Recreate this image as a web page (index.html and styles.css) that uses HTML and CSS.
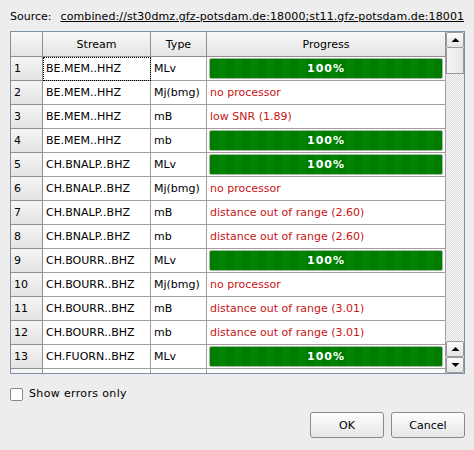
FILE: index.html
```html
<!DOCTYPE html>
<html>
<head>
<meta charset="utf-8">
<link rel="stylesheet" href="styles.css">
</head>
<body>
<div class="dialog">
  <div class="source"><span class="src-label">Source:</span><span class="src-link">combined://st30dmz.gfz-potsdam.de:18000;st11.gfz-potsdam.de:18001</span></div>
  <div class="frame">
    <div class="viewport">
      <div class="row head">
        <div class="cell hd corner"></div>
        <div class="cell hd">Stream</div>
        <div class="cell hd">Type</div>
        <div class="cell hd">Progress</div>
      </div>
      <div class="row"><div class="cell rn">1</div><div class="cell focus">BE.MEM..HHZ</div><div class="cell">MLv</div><div class="cell pc"><div class="bar">100%</div></div></div>
      <div class="row"><div class="cell rn">2</div><div class="cell">BE.MEM..HHZ</div><div class="cell">Mj(bmg)</div><div class="cell err">no processor</div></div>
      <div class="row"><div class="cell rn">3</div><div class="cell">BE.MEM..HHZ</div><div class="cell">mB</div><div class="cell err">low SNR (1.89)</div></div>
      <div class="row"><div class="cell rn">4</div><div class="cell">BE.MEM..HHZ</div><div class="cell">mb</div><div class="cell pc"><div class="bar">100%</div></div></div>
      <div class="row"><div class="cell rn">5</div><div class="cell">CH.BNALP..BHZ</div><div class="cell">MLv</div><div class="cell pc"><div class="bar">100%</div></div></div>
      <div class="row"><div class="cell rn">6</div><div class="cell">CH.BNALP..BHZ</div><div class="cell">Mj(bmg)</div><div class="cell err">no processor</div></div>
      <div class="row"><div class="cell rn">7</div><div class="cell">CH.BNALP..BHZ</div><div class="cell">mB</div><div class="cell err">distance out of range (2.60)</div></div>
      <div class="row"><div class="cell rn">8</div><div class="cell">CH.BNALP..BHZ</div><div class="cell">mb</div><div class="cell err">distance out of range (2.60)</div></div>
      <div class="row"><div class="cell rn">9</div><div class="cell">CH.BOURR..BHZ</div><div class="cell">MLv</div><div class="cell pc"><div class="bar">100%</div></div></div>
      <div class="row"><div class="cell rn">10</div><div class="cell">CH.BOURR..BHZ</div><div class="cell">Mj(bmg)</div><div class="cell err">no processor</div></div>
      <div class="row"><div class="cell rn">11</div><div class="cell">CH.BOURR..BHZ</div><div class="cell">mB</div><div class="cell err">distance out of range (3.01)</div></div>
      <div class="row"><div class="cell rn">12</div><div class="cell">CH.BOURR..BHZ</div><div class="cell">mb</div><div class="cell err">distance out of range (3.01)</div></div>
      <div class="row"><div class="cell rn">13</div><div class="cell">CH.FUORN..BHZ</div><div class="cell">MLv</div><div class="cell pc"><div class="bar">100%</div></div></div>
      <div class="row"><div class="cell rn">14</div><div class="cell">CH.FUORN..BHZ</div><div class="cell">Mj(bmg)</div><div class="cell err">no processor</div></div>
    </div>
    <div class="scrollbar">
      <div class="sb-btn"><svg width="9" height="6" viewBox="0 0 9 6"><path d="M0.5 5 L4.5 1 L8.5 5 Z" fill="#000"/></svg></div>
      <div class="sb-handle"></div>
      <div class="sb-track"></div>
      <div class="sb-btn"><svg width="9" height="6" viewBox="0 0 9 6"><path d="M0.5 5 L4.5 1 L8.5 5 Z" fill="#000"/></svg></div>
      <div class="sb-btn"><svg width="9" height="6" viewBox="0 0 9 6"><path d="M0.5 1 L4.5 5 L8.5 1 Z" fill="#000"/></svg></div>
    </div>
  </div>
  <div class="check"><span class="box"></span><span class="check-label">Show errors only</span></div>
  <div class="buttons">
    <button class="btn">OK</button>
    <button class="btn">Cancel</button>
  </div>
</div>
</body>
</html>
```
FILE: styles.css
```css
html, body {
  margin: 0;
  padding: 0;
  background: #ededed;
}
body {
  width: 474px;
  height: 450px;
  overflow: hidden;
  font-family: "DejaVu Sans", "Liberation Sans", sans-serif;
  font-size: 11px;
  color: #000;
}
.dialog {
  display: flex;
  flex-direction: column;
  padding: 10px 0 0 10px;
}
.source {
  display: flex;
  gap: 9px;
  height: 14px;
  line-height: 14px;
  white-space: nowrap;
  overflow: hidden;
  width: 464px;
}
.src-link {
  text-decoration: underline;
  letter-spacing: 0.1px;
}
.frame {
  margin-top: 7px;
  width: 453px;
  height: 341px;
  border: 1px solid #7e8ea6;
  display: flex;
  background: #fff;
}
.viewport {
  width: 435px;
  height: 341px;
  overflow: hidden;
}
.row {
  display: grid;
  grid-template-columns: 32px 108px 56px 239px;
  height: 24px;
}
.row.head {
  height: 25px;
}
.cell {
  box-sizing: border-box;
  border-right: 1px solid #a0a0a0;
  border-bottom: 1px solid #a0a0a0;
  padding-left: 3px;
  white-space: nowrap;
  overflow: hidden;
  display: flex;
  align-items: center;
}
.cell.hd {
  justify-content: center;
  padding-left: 0;
  background: linear-gradient(#f7f7f7, #e4e4e4);
  border-color: #8f8f8f;
}
.cell.rn {
  background: linear-gradient(#f5f5f5, #e3e3e3);
  border-color: #8f8f8f;
}
.cell.focus {
  outline: 1px dotted #000;
  outline-offset: -1px;
}
.cell.err {
  color: #c81414;
}
.cell.pc {
  padding: 1px 2px;
  align-items: stretch;
}
.bar {
  flex: 1;
  box-sizing: border-box;
  border: 1px solid #a6b6a6;
  border-radius: 2px;
  background: repeating-linear-gradient(90deg, #007c00 0 8px, #038503 8px 16px);
  color: #fff;
  font-weight: bold;
  display: flex;
  align-items: center;
  justify-content: center;
  letter-spacing: 1px;
}
.scrollbar {
  width: 18px;
  display: flex;
  flex-direction: column;
  background: #ededed;
}
.sb-btn {
  box-sizing: border-box;
  height: 16px;
  flex: none;
  border: 1px solid #9a9a9a;
  border-radius: 2px;
  background: linear-gradient(#fbfbfb, #e4e4e4);
  display: flex;
  align-items: center;
  justify-content: center;
}
.sb-handle {
  box-sizing: border-box;
  height: 26px;
  flex: none;
  border: 1px solid #9a9a9a;
  border-top: none;
  background: linear-gradient(90deg, #f4f4f4, #e6e6e6);
}
.sb-track {
  flex: 1;
  background-color: #f2f2f2;
  background-image: repeating-conic-gradient(#dcdcdc 0 25%, #f7f7f7 0 50%);
  background-size: 2px 2px;
}
.check {
  display: flex;
  align-items: center;
  gap: 6px;
  margin-top: 12px;
  height: 16px;
  line-height: 16px;
}
.box {
  box-sizing: border-box;
  width: 13px;
  height: 13px;
  flex: none;
  border: 1px solid #8a8a8a;
  border-radius: 2px;
  background: #fff;
}
.check-label {
  letter-spacing: 0.35px;
  white-space: nowrap;
}
.buttons {
  display: flex;
  justify-content: flex-end;
  gap: 7px;
  margin-top: 10px;
  width: 455px;
}
.btn {
  box-sizing: border-box;
  width: 74px;
  height: 26px;
  font-family: "DejaVu Sans", "Liberation Sans", sans-serif;
  font-size: 11px;
  color: #000;
  border: 1px solid #8a8a8a;
  border-radius: 3px;
  background: linear-gradient(#fdfdfd, #e6e6e6);
  padding: 0;
}
```
